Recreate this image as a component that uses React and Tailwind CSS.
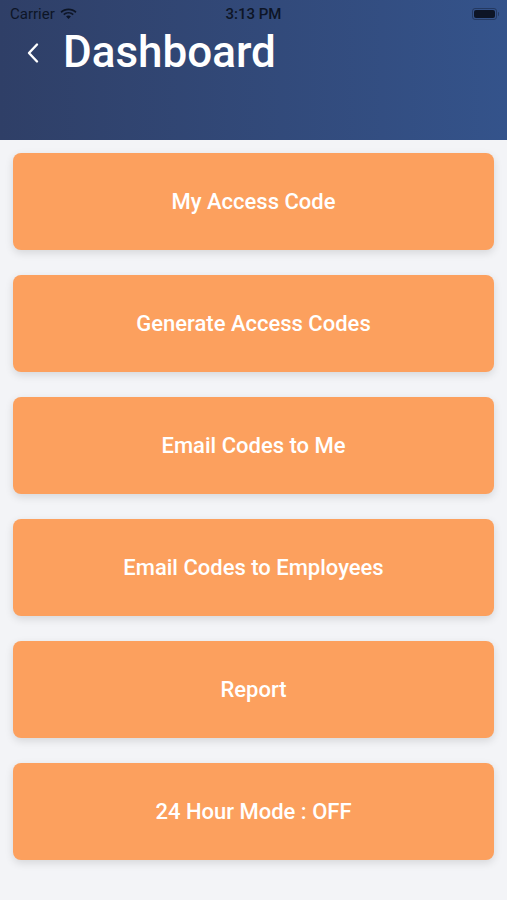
import React from 'react';

const items = [
  'My Access Code',
  'Generate Access Codes',
  'Email Codes to Me',
  'Email Codes to Employees',
  'Report',
  '24 Hour Mode : OFF',
];

function StatusBar() {
  return (
    <div className="h-[28px] px-[10px] flex items-center justify-between text-[15px] text-[#0d1526] relative">
      <div className="flex items-center gap-[5px]">
        <span>Carrier</span>
        <svg width="17" height="12" viewBox="0 0 17 12">
          <path d="M8.5 2.2c2.6 0 5 1 6.8 2.7l1.2-1.3C14.4 1.6 11.6.5 8.5.5S2.6 1.6.5 3.6l1.2 1.3C3.5 3.2 5.9 2.2 8.5 2.2z" fill="#0d1526" />
          <path d="M8.5 5.6c1.6 0 3 .6 4.1 1.6l1.2-1.3C12.4 4.6 10.5 3.9 8.5 3.9S4.6 4.6 3.2 5.9l1.2 1.3c1.1-1 2.5-1.6 4.1-1.6z" fill="#0d1526" />
          <path d="M8.5 7.4c-.9 0-1.8.4-2.4 1L8.5 11l2.4-2.6c-.6-.6-1.5-1-2.4-1z" fill="#0d1526" />
        </svg>
      </div>
      <span className="absolute left-1/2 -translate-x-1/2 font-medium">3:13 PM</span>
      <div className="flex items-center mr-[-2px]">
        <div className="w-[25px] h-[12px] rounded-[3px] border border-[#0d1526]/40 p-[1px]">
          <div className="w-full h-full rounded-[2px] bg-[#0d1526]" />
        </div>
        <div className="w-[1.5px] h-[4px] bg-[#0d1526]/40 rounded-r-sm ml-[1px]" />
      </div>
    </div>
  );
}

export default function App() {
  return (
    <div
      className="w-[507px] h-[900px] bg-[#f3f4f7] overflow-hidden"
      style={{ fontFamily: 'Roboto, "Liberation Sans", sans-serif' }}
    >
      <header className="h-[140px] bg-gradient-to-r from-[#2f3f67] to-[#34538b]">
        <StatusBar />
        <div className="flex items-center pl-[24px] mt-[-2px]">
          <svg width="18" height="24" viewBox="0 0 18 24" className="mr-[21px] mt-[2px]">
            <path d="M13 3.5 L5 12 L13 20.5" stroke="white" strokeWidth="2.4" fill="none" strokeLinecap="round" strokeLinejoin="round" />
          </svg>
          <h1 className="text-[44px] font-medium text-white leading-[52px]">Dashboard</h1>
        </div>
      </header>
      <main className="px-[13px] pt-[13px] flex flex-col gap-[25px]">
        {items.map((label) => (
          <button
            key={label}
            className="h-[97px] w-full rounded-[8px] bg-[#fca05e] text-white text-[22px] font-medium flex items-center justify-center shadow-[0_3px_8px_rgba(0,0,0,0.12)]"
          >
            {label}
          </button>
        ))}
      </main>
    </div>
  );
}
